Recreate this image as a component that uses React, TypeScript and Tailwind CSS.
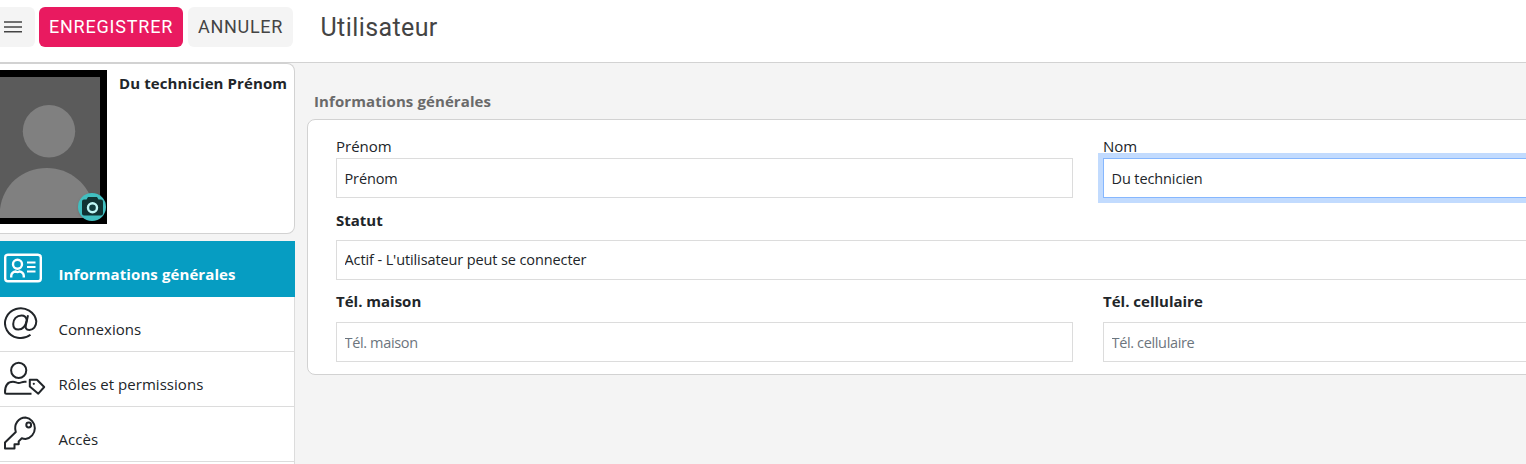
import type { ReactNode } from 'react'
import clsx from 'clsx'

function IdCardIcon() {
    return (
        <svg width="38" height="30" viewBox="0 0 38 30" fill="none" stroke="currentColor" strokeWidth="2.4">
            <rect x="1.2" y="1.7" width="35.6" height="26.6" rx="2.8" />
            <circle cx="13.5" cy="11.3" r="4.5" />
            <path d="M7.200 24.500v-1.600a4.400 4.400 0 0 1 4.400-4.400c.8.5 3 .5 3.800 0a4.400 4.400 0 0 1 4.400 4.400V24.500" />
            <path d="M23 9.500h8.500M23 14h8.500M23 18.500h8.500" strokeWidth="2.200" />
        </svg>
    )
}

function AtIcon() {
    return (
        <svg width="34" height="34" viewBox="0 0 34 34" fill="none" stroke="currentColor" strokeWidth="2">
            <path d="M26.500 28.800A15.700 14.900 0 1 1 32.300 15.200C32.300 20.500 29.300 23.900 25.300 23.900C21.900 23.900 21.300 21.800 21.900 19L24 9.300" />
            <path d="M22.800 14.300C22.400 11.200 20.400 9.400 17.500 9.400C12.600 9.400 9.200 13.300 9.200 18C9.200 21.300 11.100 23.600 14.300 23.600C18.600 23.600 21.600 20.300 22.800 14.300Z" />
        </svg>
    )
}

function UserTagIcon() {
    return (
        <svg width="42" height="35" viewBox="0 0 42 35" fill="none" stroke="currentColor" strokeWidth="2" strokeLinejoin="round">
            <circle cx="14.700" cy="9.300" r="7.600" />
            <path d="M27.500 32.800H2.500Q1 32.800 1 31.300C1 24 4.500 20.800 9 20.800C11.500 20.800 12.500 22 14.700 22C17 22 18 20.800 20.500 20.800H22.500" />
            <path d="M25.800 18.800H33L40.200 26L34.300 32.700L25.800 25.600Z" />
            <circle cx="29.800" cy="22.800" r="1.100" fill="currentColor" stroke="none" />
        </svg>
    )
}

function KeyIcon() {
    return (
        <svg width="34" height="35" viewBox="0 0 34 35" fill="none" stroke="currentColor" strokeWidth="2" strokeLinejoin="round">
            <path d="M11.800 16C9.400 8.500 14.500 1.500 21.500 1.500A10.800 10.800 0 0 1 21.500 22.900Q19.500 22.900 17.800 22.300L14.700 25.400V28.200H10.500V32.600H1V26.500Z" />
            <circle cx="24.700" cy="9" r="2.400" />
        </svg>
    )
}

function Avatar() {
    return (
        <div className="relative h-[154px] w-[107px] shrink-0 bg-black py-[7px] pr-[7px]">
            <svg width="100" height="141" viewBox="0 0 100 141" className="block bg-[#5b5b5b]">
                <circle cx="49" cy="54.300" r="26.200" fill="#808080" />
                <path d="M0 141V132C3 108 22 91 47 91C70 91 89 107 94 130V141Z" fill="#808080" />
            </svg>
            <button className="absolute right-px bottom-[3px] h-7 w-7 rounded-full bg-[#41bfc0] shadow-sm">
                <svg width="28" height="28" viewBox="0 0 28 28">
                    <path d="M8.500 6.500l1.500-2.500h9l1.500 2.500H23q2 0 2 2V20.500q0 2-2 2H6q-2 0-2-2V8.500q0-2 2-2Z" fill="#103333" />
                    <circle cx="14.500" cy="14.700" r="4.500" fill="#123e3f" stroke="#bff7f5" strokeWidth="2.400" />
                </svg>
            </button>
        </div>
    )
}

const NAV_ITEMS = [
    { label: 'Informations générales', icon: <IdCardIcon />, active: true },
    { label: 'Connexions', icon: <AtIcon /> },
    { label: 'Rôles et permissions', icon: <UserTagIcon /> },
    { label: 'Accès', icon: <KeyIcon /> },
]

function NavItem({ label, icon, active }: { label: string; icon: ReactNode; active?: boolean }) {
    return (
        <a
            className={clsx(
                'flex pl-1',
                active
                    ? 'h-14 bg-[#069dc2] font-bold tracking-[0.1px] text-white'
                    : 'h-[55px] border-r border-b border-[#dcdcdc] bg-white tracking-[0.04px] text-[#212529]'
            )}
        >
            <span className={clsx('w-[54.5px] shrink-0', active ? 'pt-[12px]' : 'pt-[9px]')}>{icon}</span>
            <span className={clsx('leading-5 whitespace-nowrap', active ? 'pt-[23px]' : 'pt-[22px]')}>{label}</span>
        </a>
    )
}

type FieldProps = {
    label: string
    value?: string
    bold?: boolean
    focused?: boolean
    className?: string
}

function Field({ label, value, bold, focused, className }: FieldProps) {
    return (
        <label className={clsx('block', className)}>
            <span className={clsx('block leading-5', bold && 'font-bold')}>{label}</span>
            <input
                className={clsx(
                    'block h-10 w-full border bg-white px-[7.5px] outline-none placeholder:text-[#6c757d]',
                    value ? 'text-[14.5px] tracking-[-0.11px]' : 'text-[14.5px] tracking-[-0.35px]',
                    bold ? 'mt-[10px]' : 'mt-[2px]',
                    focused ? 'border-[#86b7fe] ring-[5px] ring-[#c2dbfe]' : 'border-[#dcdcdc]',
                    bold && value && 'pb-0.5'
                )}
                defaultValue={value}
                placeholder={label}
            />
        </label>
    )
}

function Header() {
    return (
        <header className="flex h-[63px] items-start border-b border-[#d2d2d2] bg-white pt-[7px] font-['Roboto',sans-serif] text-[#444]">
            <button className="flex h-10 w-[35px] items-center rounded-r-md bg-[#f4f4f4] pl-1">
                <svg width="18" height="12" viewBox="0 0 18 12" stroke="#444" strokeWidth="1.400">
                    <path d="M0 1h18M0 6h18M0 10.800h18" />
                </svg>
            </button>
            <button className="ml-1 h-10 w-36 rounded-md bg-[#e91a60] text-lg tracking-[0.8px] text-white">ENREGISTRER</button>
            <button className="ml-[5px] h-10 w-[105px] rounded-md bg-[#f4f4f4] text-lg tracking-[0.7px]">ANNULER</button>
            <h1 className="ml-[27.5px] text-[25px] leading-[41px] tracking-[0.4px]">Utilisateur</h1>
        </header>
    )
}

export default function App() {
    return (
        <div className="h-[464px] w-[1526px] overflow-hidden bg-[#f4f4f4] font-['Open_Sans','Noto_Sans',sans-serif] text-[15px] text-[#212529]">
            <Header />
            <div className="flex">
                <aside className="w-[295px] shrink-0">
                    <div className="flex h-[171px] rounded-r-lg border-y border-r border-[#d2d2d2] bg-white pt-[6px]">
                        <Avatar />
                        <div className="pt-[3px] pl-3 leading-5 font-bold tracking-[0.1px] whitespace-nowrap">Du technicien Prénom</div>
                    </div>
                    <nav className="mt-[7px]">
                        {NAV_ITEMS.map((item) => (
                            <NavItem key={item.label} {...item} />
                        ))}
                        <div className="h-2 border-r border-[#dcdcdc] bg-white" />
                    </nav>
                </aside>
                <main className="ml-3 min-w-0 flex-1 overflow-hidden pt-7">
                    <h2 className="pl-[7px] leading-5 font-bold tracking-[0.1px] text-[#6a6a6a]">Informations générales</h2>
                    <section className="mt-2 grid h-[256px] w-[1563px] grid-cols-[737px_737px] content-start gap-x-[30px] rounded-lg border border-[#d2d2d2] bg-white pt-4 pl-7">
                        <Field label="Prénom" value="Prénom" />
                        <Field label="Nom" value="Du technicien" focused />
                        <Field
                            label="Statut"
                            value="Actif - L'utilisateur peut se connecter"
                            bold
                            className="col-span-2 mt-3"
                        />
                        <Field label="Tél. maison" bold className="mt-[11px] [&>input]:mt-[11px]" />
                        <Field label="Tél. cellulaire" bold className="mt-[11px] [&>input]:mt-[11px]" />
                    </section>
                </main>
            </div>
        </div>
    )
}
